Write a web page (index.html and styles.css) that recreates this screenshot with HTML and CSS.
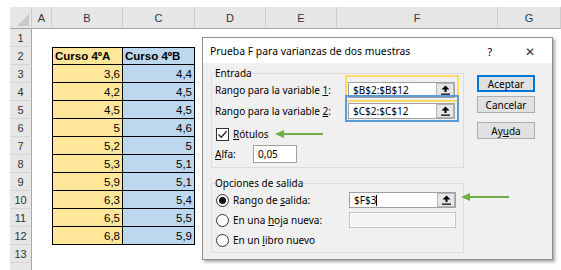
FILE: index.html
```html
<!doctype html>
<html lang="es">
<head>
<meta charset="utf-8">
<title>Prueba F para varianzas de dos muestras</title>
<link rel="stylesheet" href="styles.css">
</head>
<body>

<div class="sheet">
	<div class="corner"><span class="tri"></span></div>
	<div class="ch">A</div><div class="ch">B</div><div class="ch">C</div><div class="ch">D</div><div class="ch">E</div><div class="ch">F</div><div class="ch">G</div>

	<div class="rh">1</div>
	<div class="rh">2</div><div class="cell cb top yel hd">Curso 4ºA</div><div class="cell cc top blu hd">Curso 4ºB</div>
	<div class="rh">3</div><div class="cell cb yel">3,6</div><div class="cell cc blu">4,4</div>
	<div class="rh">4</div><div class="cell cb yel">4,2</div><div class="cell cc blu">4,5</div>
	<div class="rh">5</div><div class="cell cb yel">4,5</div><div class="cell cc blu">4,5</div>
	<div class="rh">6</div><div class="cell cb yel">5</div><div class="cell cc blu">4,6</div>
	<div class="rh">7</div><div class="cell cb yel">5,2</div><div class="cell cc blu">5</div>
	<div class="rh">8</div><div class="cell cb yel">5,3</div><div class="cell cc blu">5,1</div>
	<div class="rh">9</div><div class="cell cb yel">5,9</div><div class="cell cc blu">5,1</div>
	<div class="rh">10</div><div class="cell cb yel">6,3</div><div class="cell cc blu">5,4</div>
	<div class="rh">11</div><div class="cell cb yel">6,5</div><div class="cell cc blu">5,5</div>
	<div class="rh">12</div><div class="cell cb yel">6,8</div><div class="cell cc blu">5,9</div>
	<div class="rh">13</div>
	<div class="rh"></div>
</div>

<div class="dialog">
	<div class="titlebar">
		<span class="title">Prueba F para varianzas de dos muestras</span>
		<span class="help">?</span>
		<span class="close">&#x2715;</span>
	</div>

	<div class="dlgBody">
		<div class="groups">

			<fieldset class="group entrada">
				<legend>Entrada</legend>

				<div class="field hlYellow">
					<label>Rango para la variable <u>1</u>:</label>
					<div class="ref"><span class="val">$B$2:$B$12</span><span class="pick"><svg width="9" height="10" viewBox="0 0 9 10"><path d="M0.5 4.5 L4.5 0.5 L8.5 4.5 Z M3.5 4 H5.5 V7 H3.5 Z M0 8.5 H9 V9.8 H0 Z"/></svg></span></div>
				</div>

				<div class="field hlBlue">
					<label>Rango para la variable <u>2</u>:</label>
					<div class="ref"><span class="val">$C$2:$C$12</span><span class="pick"><svg width="9" height="10" viewBox="0 0 9 10"><path d="M0.5 4.5 L4.5 0.5 L8.5 4.5 Z M3.5 4 H5.5 V7 H3.5 Z M0 8.5 H9 V9.8 H0 Z"/></svg></span></div>
				</div>

				<div class="check">
					<span class="box"><svg width="11" height="11" viewBox="0 0 11 11"><path d="M1.5 5.5 L4.3 8.3 L9.6 2.2" fill="none" stroke="#222" stroke-width="1.3"/></svg></span>
					<span><u>R</u>ótulos</span>
				</div>

				<div class="alfa">
					<label><u>A</u>lfa:</label>
					<span class="txt">0,05</span>
				</div>
			</fieldset>

			<fieldset class="group salida">
				<legend>Opciones de salida</legend>

				<div class="opt">
					<span class="radio on"></span>
					<label>Rango de <u>s</u>alida:</label>
					<div class="ref"><span class="val">$F$3<i class="caret"></i></span><span class="pick"><svg width="9" height="10" viewBox="0 0 9 10"><path d="M0.5 4.5 L4.5 0.5 L8.5 4.5 Z M3.5 4 H5.5 V7 H3.5 Z M0 8.5 H9 V9.8 H0 Z"/></svg></span></div>
				</div>

				<div class="opt">
					<span class="radio"></span>
					<label>En una <u>h</u>oja nueva:</label>
					<div class="ref off"></div>
				</div>

				<div class="opt">
					<span class="radio"></span>
					<label>En un <u>l</u>ibro nuevo</label>
				</div>
			</fieldset>

		</div>

		<div class="buttons">
			<button class="default">Aceptar</button>
			<button>Cancelar</button>
			<button class="help-btn">Ay<u>u</u>da</button>
		</div>
	</div>
</div>

<svg class="arrow arrow1" width="50" height="8" viewBox="0 0 50 8"><path d="M8 4 H48" stroke="#70ad47" stroke-width="2.2"/><path d="M0 4 L9 0 L9 8 Z" fill="#70ad47"/></svg>
<svg class="arrow arrow2" width="50" height="8" viewBox="0 0 50 8"><path d="M8 4 H48" stroke="#70ad47" stroke-width="2.2"/><path d="M0 4 L9 0 L9 8 Z" fill="#70ad47"/></svg>

</body>
</html>
```

FILE: styles.css
```css
body { margin: 0; background: #fff; font: 11.5px "Liberation Sans", Arial, sans-serif; color: #000; overflow: hidden; }

/* spreadsheet */
.sheet { display: grid; grid-template-columns: 22px 20px 71px 72px 71px 71px 161px 1fr; grid-template-rows: 22px; grid-auto-rows: 18px; padding: 7px 0 0 10px; }

.corner, .ch { background: #e6e6e6; border-bottom: 1px solid #a6a6a6; border-right: 1px solid #cdcdcd; box-sizing: border-box; }
.corner { position: relative; }
.corner .tri { position: absolute; right: 2px; bottom: 2px; border-left: 12px solid transparent; border-bottom: 12px solid #c9c9c9; }
.ch { color: #333; text-align: center; line-height: 22px; font-size: 11px; }

.rh { grid-column: 1; background: #e6e6e6; border-bottom: 1px solid #d4d4d4; border-right: 1px solid #a6a6a6; box-sizing: border-box; color: #333; text-align: center; line-height: 18px; font-size: 11px; }

.cell { box-sizing: border-box; border-right: 1px solid #000; border-bottom: 1px solid #000; text-align: right; padding-right: 2px; line-height: 18px; }
.cb { grid-column: 3; border-left: 1px solid #000; }
.cc { grid-column: 4; }
.top { border-top: 1px solid #000; line-height: 16px; }
.yel { background: #ffe699; }
.blu { background: #bdd7ee; }
.hd { font-weight: bold; text-align: left; padding-left: 2px; }

/* dialog */
.dialog { position: absolute; left: 202px; top: 37px; width: 351px; height: 223px; box-sizing: border-box; border: 1px solid #8e8e8e; background: #f0f0f0; box-shadow: 2px 2px 3px rgba(0, 0, 0, .35); font: 10px "Noto Sans", "Open Sans", sans-serif; }

.titlebar { height: 25px; background: #fff; display: flex; align-items: center; padding: 1px 0 0 7px; box-sizing: border-box; font-size: 10.4px; }
.titlebar .title { flex: 1; }
.titlebar .help { width: 36px; text-align: center; font-size: 11px; }
.titlebar .close { width: 44px; text-align: center; font-size: 12px; color: #333; }

.dlgBody { display: flex; padding: 3px 0 0 8px; }
.groups { width: 253px; }
.group { margin: 0; border: 1px solid #dcdcdc; padding: 0 0 0 3px; }
.group legend { padding: 0; line-height: 14px; }
.entrada { height: 102px; box-sizing: border-box; }
.salida { margin-top: 8px; height: 77px; box-sizing: border-box; }

.field, .alfa, .opt, .check { display: flex; align-items: center; position: relative; }
.field { height: 16px; margin-top: 2px; }
.field + .field { margin-top: 5px; }
.field label { width: 133px; }

.ref { display: flex; width: 107px; height: 16px; box-sizing: border-box; border: 1px solid #a0a0a0; background: #fff; }
.ref .val { flex: 1; padding-left: 4px; line-height: 14px; }
.ref .pick { width: 16px; border: 1px solid #b4b4b4; background: #e6e6e6; display: flex; align-items: center; justify-content: center; }
.ref.off { background: #f4f4f4; border-color: #c4c4c4; box-shadow: inset 0 0 0 1px #fff; width: 107px; }
.caret { display: inline-block; width: 1px; height: 11px; background: #000; vertical-align: -2px; }

.hlYellow::before, .hlBlue::before { content: ""; position: absolute; left: 130px; width: 110px; height: 23px; pointer-events: none; }
.hlYellow::before { top: -7px; border: 2px solid #ffd966; }
.hlBlue::before { top: -8px; border: 2px solid #5b9bd5; height: 23px; }

.check { height: 14px; margin-top: 8px; }
.box { width: 13px; height: 13px; box-sizing: border-box; border: 1px solid #333; background: #fff; display: flex; align-items: center; justify-content: center; margin: 0 4px 0 1px; }

.alfa { height: 18px; margin-top: 4px; }
.alfa label { width: 38px; }
.alfa .txt { width: 44px; height: 18px; box-sizing: border-box; border: 1px solid #a0a0a0; background: #fff; padding-left: 4px; line-height: 16px; }

.opt { height: 16px; margin-top: 2px; }
.opt + .opt { margin-top: 4px; }
.opt label { width: 116px; }
.radio { width: 13px; height: 13px; box-sizing: border-box; border: 1px solid #333; border-radius: 50%; background: #fff; margin: 0 4px 0 1px; position: relative; }
.radio.on::after { content: ""; position: absolute; left: 2px; top: 2px; width: 7px; height: 7px; border-radius: 50%; background: #111; }

.buttons { display: flex; flex-direction: column; margin: 9px 0 0 13px; }
.buttons button { width: 58px; height: 17px; padding: 0; font: inherit; background: #e1e1e1; border: 1px solid #adadad; margin-bottom: 4px; }
.buttons .default { border: 1px solid #0078d7; box-shadow: inset 0 0 0 1px #0078d7; }
.buttons .help-btn { margin-top: 5px; }

.arrow { position: absolute; }
.arrow1 { left: 275px; top: 130px; }
.arrow2 { left: 461px; top: 193px; }
```
